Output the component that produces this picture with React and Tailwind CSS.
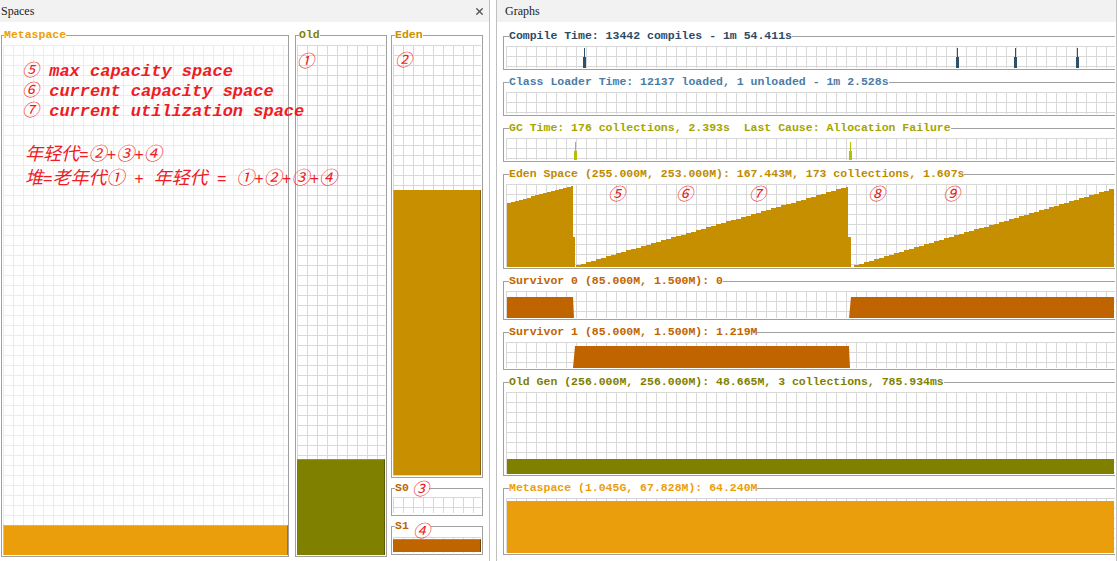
import React from 'react'
import { X } from 'lucide-react'

const stairs = (x0, y0, x1, y1, s = 4) => {
    const p = []
    for (let x = x0; x < x1; x += s) {
        const y = Math.round(y0 + ((y1 - y0) * (x - x0)) / (x1 - x0))
        p.push(`${x},${y}`, `${Math.min(x + s, x1)},${y}`)
    }
    return p.join(' ')
}

const gridDark = "bg-[linear-gradient(to_right,#d8d8d8_1px,transparent_1px),linear-gradient(to_bottom,#d8d8d8_1px,transparent_1px)] bg-[size:10px_10px]"
const gridLight = "bg-[linear-gradient(to_right,#ececec_1px,transparent_1px),linear-gradient(to_bottom,#ececec_1px,transparent_1px)] bg-[size:10px_10px]"
const legendCls = "font-['Liberation_Mono',monospace] text-[11.5px] font-bold leading-[12px] whitespace-pre"
const mark = "font-['Noto_Sans_CJK_SC',sans-serif] text-[17px] font-normal italic leading-[18px] text-[#ee1c25]"

// half-width ascii inside the chinese lines
const A = ({ children }) => <span className="font-['Liberation_Mono',monospace] text-[16px]">{children}</span>

const Graph = ({ title, color, h, children }) => (
    <fieldset className="min-w-0 border border-r-0 border-[#a0a0a0] pb-[1px] pl-[2px] pt-[4px]">
        <legend className={`ml-[3px] ${legendCls} ${color}`}>{title}</legend>
        <div className={`relative ${h} ${gridDark}`}>{children}</div>
    </fieldset>
)

const Spike = ({ x, top, color }) => (
    <>
        <rect x={x + 1} y={top} width="1" height={22 - top} fill={color} />
        <rect x={x} y={top + 9} width="3" height={13 - top} fill={color} />
    </>
)

const App = () => {
    return (
        <div className="flex h-[561px] w-[1117px] overflow-hidden bg-white text-[#222]">
            {/* Spaces */}
            <div className="flex w-[490px] shrink-0 flex-col border-r border-[#c0c0c0]">
                <div className="flex h-[22px] shrink-0 items-center justify-between bg-[#f2f2f2] pl-[1px] pr-[4px]">
                    <span className="font-['Liberation_Serif',serif] text-[12px]">Spaces</span>
                    <X size={11} strokeWidth={3} className="text-[#555]" />
                </div>
                <div className="relative flex min-h-0 flex-1 items-start pl-[1px] pt-[7px]">
                    <fieldset className="w-[288px] border border-[#a0a0a0] pb-[1px] pl-[1px] pt-[4px]">
                        <legend className={`ml-[1px] ${legendCls} text-[#eb9e0c]`}>Metaspace</legend>
                        <div className={`flex h-[510px] flex-col justify-end ${gridLight}`}>
                            <div className="h-[30px] border-l border-t border-r border-l-[#f7cc10] border-t-[#f2b810] border-r-[#a87400] bg-[#eb9e0c]" />
                        </div>
                    </fieldset>
                    <fieldset className="ml-[6px] w-[92px] border border-[#a0a0a0] pb-[1px] pl-[1px] pr-[1px] pt-[4px]">
                        <legend className={`ml-[2px] ${legendCls} text-[#808000]`}>Old</legend>
                        <div className={`relative flex h-[510px] flex-col justify-end ${gridDark}`}>
                            <span className={`absolute left-0 top-[6px] ${mark}`}>①</span>
                            <div className="h-[96px] border-r border-t border-r-[#5a5a00] border-t-[#9a9a10] bg-[#808000]" />
                        </div>
                    </fieldset>
                    <div className="ml-[4px] flex w-[92px] flex-col">
                        <fieldset className="border border-[#a0a0a0] pb-[1px] pl-[1px] pr-[1px] pt-[4px]">
                            <legend className={`ml-[2px] ${legendCls} text-[#c89000]`}>Eden</legend>
                            <div className={`relative flex h-[431px] flex-col justify-end pb-[1px] ${gridDark}`}>
                                <span className={`absolute left-[2px] top-[5px] ${mark}`}>②</span>
                                <div className="h-[285px] border-l border-r border-l-[#e2aa10] border-r-[#8a6400] bg-[#c89000]" />
                            </div>
                        </fieldset>
                        <fieldset className="mt-[4px] border border-[#a0a0a0] pb-[2px] pl-[1px] pr-[1px] pt-[3px]">
                            <legend className={`relative ml-[2px] pr-[20px] ${legendCls} text-[#c06400]`}>
                                S0<span className={`absolute left-[17px] top-[-3px] ${mark}`}>③</span>
                            </legend>
                            <div className={`h-[16px] ${gridDark}`} />
                        </fieldset>
                        <fieldset className="mt-[4px] border border-[#a0a0a0] pb-[1px] pl-[1px] pr-[1px] pt-[5px]">
                            <legend className={`relative ml-[2px] pr-[22px] ${legendCls} text-[#c06400]`}>
                                S1<span className={`absolute left-[18px] top-[1px] ${mark}`}>④</span>
                            </legend>
                            <div className={`flex h-[16px] flex-col justify-end pb-[1px] ${gridDark}`}>
                                <div className="h-[13px] border-r border-t border-r-[#7a4000] border-t-[#d88000] bg-[#c06400]" />
                            </div>
                        </fieldset>
                    </div>

                    {/* annotations */}
                    <div className="absolute left-[22px] top-[40px] z-10 font-['Liberation_Mono','Noto_Sans_CJK_SC',monospace] text-[17px] font-bold italic leading-[20px] whitespace-nowrap text-[#ee1c25]">
                        <div><span className="font-normal">⑤</span> max capacity space</div>
                        <div><span className="font-normal">⑥</span> current capacity space</div>
                        <div><span className="font-normal">⑦</span> current utilization space</div>
                    </div>
                    <div className="absolute left-[25px] top-[120px] z-10 font-['Noto_Sans_CJK_SC',sans-serif] text-[18px] italic leading-[20px] whitespace-pre text-[#ee1c25]">
                        <div>年轻代<A>=</A>②<A>+</A>③<A>+</A>④</div>
                        <div>堆<A>=</A>老年代①<A> + </A>年轻代<A> = </A>①<A>+</A>②<A>+</A>③<A>+</A>④</div>
                    </div>
                </div>
            </div>

            <div className="w-[6px] shrink-0" />

            {/* Graphs */}
            <div className="flex flex-1 flex-col border-l border-r border-[#c0c0c0]">
                <div className="flex h-[22px] shrink-0 items-center bg-[#f2f2f2] pl-[8px]">
                    <span className="font-['Liberation_Serif',serif] text-[12px]">Graphs</span>
                </div>
                <div className="flex flex-col gap-[6px] pl-[6px] pr-[1px] pt-[8px]">
                    <Graph title="Compile Time: 13442 compiles - 1m 54.411s" color="text-[#2c4a66]" h="h-[22px]">
                        <svg className="absolute inset-0" width="608" height="22">
                            <Spike x={77} top={2} color="#2e5068" />
                            <Spike x={450} top={2} color="#2e5068" />
                            <Spike x={508} top={2} color="#2e5068" />
                            <Spike x={570} top={2} color="#2e5068" />
                        </svg>
                    </Graph>
                    <Graph title="Class Loader Time: 12137 loaded, 1 unloaded - 1m 2.528s" color="text-[#4a7ca6]" h="h-[22px]" />
                    <Graph title="GC Time: 176 collections, 2.393s  Last Cause: Allocation Failure" color="text-[#a5a500]" h="h-[22px]">
                        <svg className="absolute inset-0" width="608" height="22">
                            <Spike x={68} top={4} color="#b2c000" />
                            <Spike x={343} top={4} color="#b2c000" />
                        </svg>
                    </Graph>
                    <Graph title="Eden Space (255.000M, 253.000M): 167.443M, 173 collections, 1.607s" color="text-[#c08a00]" h="h-[83px]">
                        <svg className="absolute inset-0" width="608" height="83">
                            <polygon fill="#c68f00" points={`1,83 1,19 ${stairs(1, 19, 67, 1, 4)} 67,1 67,53 69,53 69,83`} />
                            <polygon fill="#c68f00" points={`70,83 ${stairs(70, 81, 342, 2, 5)} 342,2 342,53 345,53 345,83`} />
                            <polygon fill="#c68f00" points={`348,83 ${stairs(348, 81, 608, 4, 5)} 608,4 608,83`} />
                        </svg>
                        <span className={`absolute left-[102px] top-0 ${mark}`}>⑤</span>
                        <span className={`absolute left-[170px] top-0 ${mark}`}>⑥</span>
                        <span className={`absolute left-[243px] top-0 ${mark}`}>⑦</span>
                        <span className={`absolute left-[362px] top-0 ${mark}`}>⑧</span>
                        <span className={`absolute left-[437px] top-0 ${mark}`}>⑨</span>
                    </Graph>
                    <Graph title="Survivor 0 (85.000M, 1.500M): 0" color="text-[#c06400]" h="h-[27px]">
                        <svg className="absolute inset-0" width="608" height="27">
                            <polygon fill="#c06400" points="1,27 1,6 67,6 68,27" />
                            <polygon fill="#c06400" points="343,27 345,6 608,6 608,27" />
                        </svg>
                    </Graph>
                    <Graph title="Survivor 1 (85.000M, 1.500M): 1.219M" color="text-[#c06400]" h="h-[26px]">
                        <svg className="absolute inset-0" width="608" height="26">
                            <polygon fill="#c06400" points="67,26 69,4 343,4 344,26" />
                        </svg>
                    </Graph>
                    <Graph title="Old Gen (256.000M, 256.000M): 48.665M, 3 collections, 785.934ms" color="text-[#808000]" h="h-[82px]">
                        <svg className="absolute inset-0" width="608" height="82">
                            <rect x="1" y="67" width="607" height="15" fill="#808000" />
                        </svg>
                    </Graph>
                    <Graph title="Metaspace (1.045G, 67.828M): 64.240M" color="text-[#eb9e0c]" h="h-[55px]">
                        <svg className="absolute inset-0" width="608" height="55">
                            <rect x="1" y="3" width="607" height="52" fill="#eb9e0c" />
                        </svg>
                    </Graph>
                </div>
            </div>
        </div>
    )
}

export default App
